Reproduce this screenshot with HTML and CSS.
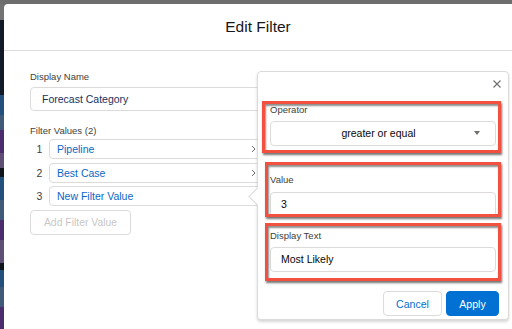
FILE: index.html
```html
<!DOCTYPE html>
<html lang="en">
<head>
    <meta charset="UTF-8">
    <title>Edit Filter</title>
    <link rel="stylesheet" href="styles.css">
</head>
<body>
    <div class="page">
        <div class="strip">
            <div class="s-gray" style="height: 16px"></div>
            <div class="s-dark" style="height: 75px"></div>
            <div class="s-blue" style="height: 20px"></div>
            <div class="s-slate" style="height: 15px"></div>
            <div class="s-purple" style="height: 23px"></div>
            <div class="s-mauve" style="height: 15px"></div>
            <div class="s-black" style="height: 9px"></div>
            <div class="s-blue" style="height: 23px"></div>
            <div class="s-slate" style="height: 20px"></div>
            <div class="s-purple" style="height: 20px"></div>
            <div class="s-mauve" style="height: 23px"></div>
            <div class="s-black" style="height: 7px"></div>
            <div class="s-blue" style="height: 17px"></div>
            <div class="s-slate" style="height: 20px"></div>
            <div class="s-purple" style="height: 22px"></div>
        </div>

        <div class="modal">
            <div class="modal-header">Edit Filter</div>

            <div class="modal-body">
                <div class="label">Display Name</div>
                <div class="input name-input">Forecast Category</div>

                <div class="label values-label">Filter Values (2)</div>
                <div class="value-list">
                    <div class="value-row">
                        <span class="num">1</span>
                        <div class="value-item">
                            <span>Pipeline</span>
                            <svg class="chevron" width="5" height="8" viewBox="0 0 5 8"><path d="M1 1 L4 4 L1 7" fill="none" stroke="#706e6b" stroke-width="1"/></svg>
                        </div>
                    </div>
                    <div class="value-row">
                        <span class="num">2</span>
                        <div class="value-item">
                            <span>Best Case</span>
                            <svg class="chevron" width="5" height="8" viewBox="0 0 5 8"><path d="M1 1 L4 4 L1 7" fill="none" stroke="#706e6b" stroke-width="1"/></svg>
                        </div>
                    </div>
                    <div class="value-row">
                        <span class="num">3</span>
                        <div class="value-item">
                            <span>New Filter Value</span>
                        </div>
                    </div>
                </div>

                <button class="add-btn" disabled>Add Filter Value</button>
            </div>

            <!-- popover for the selected filter value -->
            <div class="popover">
                <div class="nub"></div>
                <div class="pop-head">
                    <svg width="8" height="8" viewBox="0 0 8 8"><path d="M0.5 0.5 L7.5 7.5 M7.5 0.5 L0.5 7.5" stroke="#706e6b" stroke-width="1.1"/></svg>
                </div>

                <div class="field">
                    <div class="label">Operator</div>
                    <div class="input select">
                        <span class="select-text">greater or equal</span>
                        <span class="arrow"></span>
                    </div>
                </div>

                <div class="field value-field">
                    <div class="label">Value</div>
                    <div class="input pop-input">3</div>
                </div>

                <div class="field text-field">
                    <div class="label">Display Text</div>
                    <div class="input pop-input">Most Likely</div>
                </div>

                <div class="pop-footer">
                    <button class="btn btn-neutral">Cancel</button>
                    <button class="btn btn-brand">Apply</button>
                </div>

                <div class="mark mark-1"></div>
                <div class="mark mark-2"></div>
                <div class="mark mark-3"></div>
            </div>
        </div>
    </div>
</body>
</html>
```

FILE: styles.css
```css
body {
    margin: 0;
    padding-top: 4px;
    background-color: #6e6e6e;
    font-family: "Liberation Sans", Arial, sans-serif;
    overflow: hidden;
}

.page {
    display: flex;
    height: 325px;
}

.strip {
    width: 4px;
    flex-shrink: 0;
}

.s-gray { background-color: #737373; }
.s-dark { background-color: #121a27; }
.s-blue { background-color: #23507c; }
.s-slate { background-color: #3e5a78; }
.s-purple { background-color: #4b2d6f; }
.s-mauve { background-color: #5e4e74; }
.s-black { background-color: #10141c; }

.modal {
    position: relative;
    flex: 1;
    background-color: white;
    border-radius: 4px 0 0 0;
}

.modal-header {
    height: 46px;
    border-bottom: 1px solid #dcdcdc;
    display: flex;
    align-items: center;
    justify-content: center;
    font-size: 15.5px;
    color: #181818;
}

.modal-body {
    padding: 20px 0 0 26px;
}

.label {
    font-size: 9.5px;
    line-height: 12px;
    color: #3e3e3c;
}

.input {
    box-sizing: border-box;
    height: 25px;
    border: 1px solid #dddbda;
    border-radius: 4px;
    display: flex;
    align-items: center;
    font-size: 10.5px;
    color: #080707;
    background-color: white;
}

.name-input {
    margin-top: 4px;
    width: 240px;
    height: 24px;
    padding-left: 11px;
    color: #16325c;
}

.values-label {
    margin-top: 14px;
}

.value-list {
    margin-top: 2px;
    display: flex;
    flex-direction: column;
    gap: 3.6px;
}

.value-row {
    display: flex;
    align-items: center;
}

.num {
    width: 19px;
    text-align: center;
    font-size: 10.5px;
    color: #3e3e3c;
}

.value-item {
    box-sizing: border-box;
    width: 220px;
    height: 20px;
    border: 1px solid #dddbda;
    border-radius: 4px;
    display: flex;
    align-items: center;
    justify-content: space-between;
    padding: 0 12px 0 7px;
    font-size: 10.5px;
    color: #0b67c7;
}

.add-btn {
    margin-top: 3.5px;
    width: 101px;
    height: 25px;
    background-color: white;
    border: 1px solid #dddbda;
    border-radius: 4px;
    font-family: inherit;
    font-size: 10.4px;
    color: #c9c7c5;
    padding: 0;
}

.popover {
    position: absolute;
    left: 253px;
    top: 67px;
    box-sizing: border-box;
    width: 252px;
    height: 249px;
    padding: 0 12px;
    background-color: white;
    border: 1px solid #dddbda;
    border-radius: 4px;
    box-shadow: 0 2px 3px rgba(0, 0, 0, 0.16);
}

.nub {
    position: absolute;
    left: -7px;
    top: 118px;
    width: 12px;
    height: 12px;
    background-color: white;
    border-left: 1px solid #dddbda;
    border-bottom: 1px solid #dddbda;
    transform: rotate(45deg);
}

.pop-head {
    height: 31.5px;
    box-sizing: border-box;
    padding-top: 8px;
    margin-right: -4.5px;
    display: flex;
    justify-content: flex-end;
    align-items: flex-start;
}

.field .input {
    margin-top: 5px;
}

.value-field {
    margin-top: 28px;
}

.value-field .input {
    margin-top: 6px;
}

.text-field {
    margin-top: 13px;
}

.select {
    padding: 0 15px 0 12px;
}

.select-text {
    flex: 1;
    text-align: center;
}

.arrow {
    width: 0;
    height: 0;
    border-left: 3px solid transparent;
    border-right: 3px solid transparent;
    border-top: 4px solid #706e6b;
}

.pop-input {
    padding-left: 10px;
}

.pop-footer {
    margin-top: 19.5px;
    margin-right: -3px;
    display: flex;
    justify-content: flex-end;
    gap: 4px;
}

.btn {
    height: 25px;
    border-radius: 4px;
    font-family: inherit;
    font-size: 10.6px;
    padding: 0;
}

.btn-neutral {
    width: 59px;
    background-color: white;
    border: 1px solid #dddbda;
    color: #0070d2;
}

.btn-brand {
    width: 53px;
    background-color: #0070d2;
    border: 1px solid #0070d2;
    color: white;
}

/* red annotation boxes */
.mark {
    position: absolute;
    box-sizing: border-box;
    border: 3px solid #f2513f;
    box-shadow: 1px 2px 2px rgba(0, 0, 0, 0.55), inset 1px 2px 2px rgba(0, 0, 0, 0.45);
}

.mark-1 {
    left: 4px;
    top: 28.7px;
    width: 238.7px;
    height: 52px;
}

.mark-2 {
    left: 6.7px;
    top: 89.7px;
    width: 236px;
    height: 55.3px;
}

.mark-3 {
    left: 6.7px;
    top: 151.3px;
    width: 236px;
    height: 57.7px;
}
```
